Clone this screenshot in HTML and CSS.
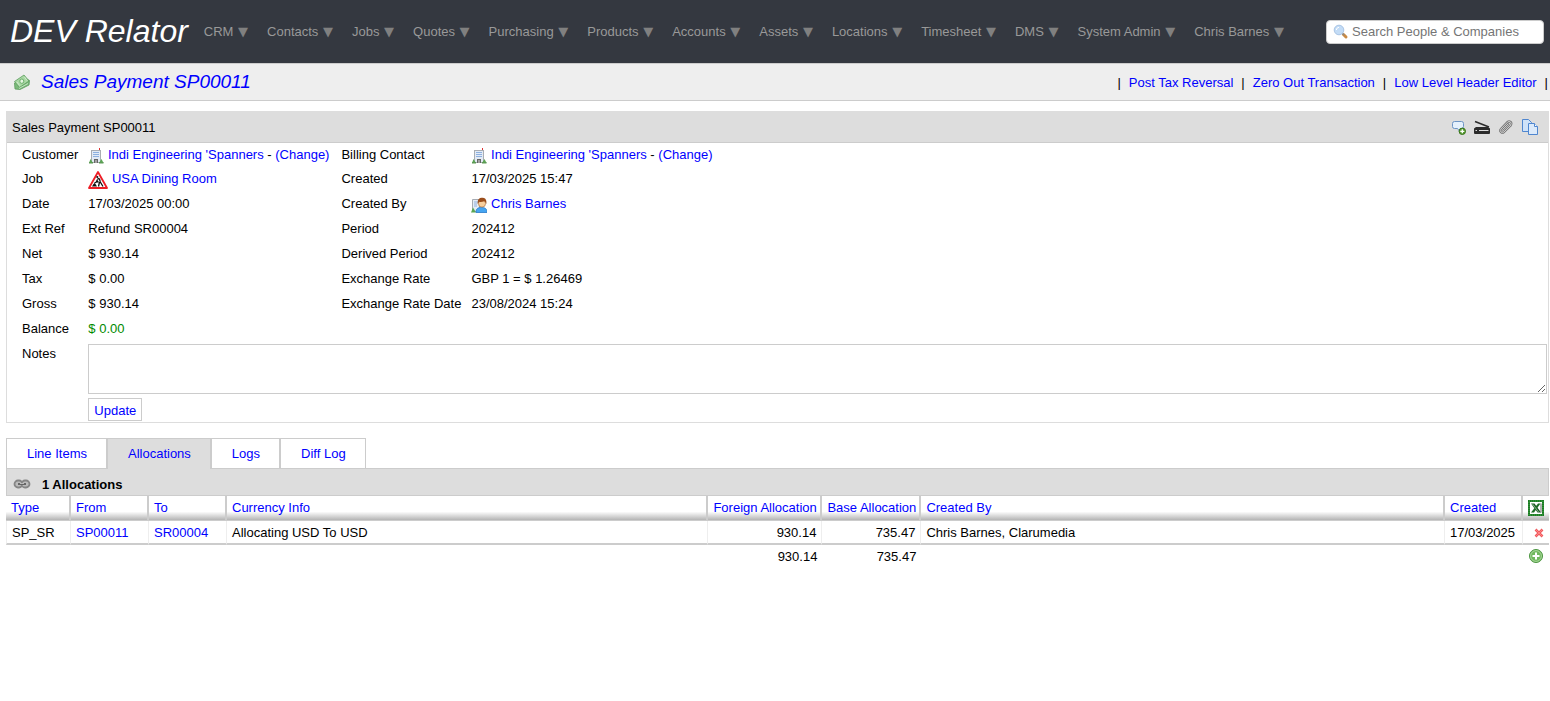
FILE: index.html
```
<!DOCTYPE html>
<html lang="en">
<head>
    <meta charset="UTF-8">
    <meta name="viewport" content="width=device-width, initial-scale=1.0">
    <title>Sales Payment SP00011</title>
    <link rel="stylesheet" href="styles.css">
</head>
<body>
    <svg class="sprite" aria-hidden="true">
        <symbol id="i-building" viewBox="0 0 16 16">
            <path d="M3 2h10v13H3z" fill="#a9adb3"/>
            <path d="M4 3h8v11H4z" fill="#e3ebf5"/>
            <path d="M5 4.500h6M5 6.500h6M5 8.500h6" stroke="#8db0e0"/>
            <path d="M6 11h4v4H6z" fill="#666"/>
            <path d="M7.500 12h1v3h-1z" fill="#ddd"/>
            <path d="M11 0h1v2h-1z" fill="#d33"/>
            <path d="M1 15l1.500-4L5 15zM11 15l2.500-4L15.500 15z" fill="#5aa653"/>
            <path d="M1 14h4v1.500H1zM11 14h4.500v1.500H11z" fill="#5c9a55"/>
        </symbol>
        <symbol id="i-works" viewBox="0 0 20 18">
            <path d="M10 1L19 17H1z" fill="#fff" stroke="#ee1c25" stroke-width="1.800" stroke-linejoin="round"/>
            <path d="M4 15.500l1.500-2.500h2L9 15.500z" fill="#111"/>
            <circle cx="9.300" cy="6" r="1.100" fill="#111"/>
            <path d="M9.500 7.500l2 .5.8 3L15 15.500M11.500 11L10.500 15.500M9.500 8.500L8.500 10.500l2 .5M10 10L6 12.500" fill="none" stroke="#111" stroke-width="1.300"/>
        </symbol>
        <symbol id="i-person" viewBox="0 0 16 16">
            <path d="M1.500 2.500h7v12h-7z" fill="#e4ecf5" stroke="#a5abb3"/>
            <path d="M3 5h4M3 7h3M3 9h3" stroke="#8fb0dd"/>
            <path d="M0 15.500l2-5 3 5z" fill="#5aa653"/>
            <path d="M5 15.500c0-4 2-5 5.500-5s5.500 1 5.500 5z" fill="#45a5f2" stroke="#2878c8" stroke-width=".8"/>
            <circle cx="11" cy="6.500" r="3.600" fill="#f8cf9d" stroke="#a3642e" stroke-width=".6"/>
            <path d="M6.800 7C6 2.500 8.500.5 11 .8c3-.3 5.200 2 4.200 6.200-.7-1.500-1-2.500-2-2.800-2 .8-4 .8-5 .5z" fill="#9b4d1b"/>
        </symbol>
        <symbol id="i-money" viewBox="0 0 16 16">
            <path d="M.5 9L10 3.500l5.500 3L15 11l-9 4.500L1 15z" fill="#7bb97b" stroke="#5a9c5c" stroke-width=".8"/>
            <path d="M.5 7.500L10 1l5 6-9.500 6.500z" fill="#a9d8a4" stroke="#5a9c5c" stroke-width=".8"/>
            <ellipse cx="7.800" cy="7.200" rx="2" ry="2.200" fill="#e3f5df" stroke="#6aaf6a"/>
            <path d="M3 8l2.500 3.500M10.500 3l2.500 3.500M5 14.500l9-5" stroke="#d8edd5" stroke-width=".8"/>
        </symbol>
        <symbol id="i-search" viewBox="0 0 16 16">
            <path d="M10.500 10.500l2.500 2.500" stroke="#c98a43" stroke-width="3" stroke-linecap="round"/>
            <path d="M9 9l2 2" stroke="#888" stroke-width="1.500"/>
            <circle cx="6" cy="6" r="4.800" fill="#c3dcf6" stroke="#a9c4e4"/>
            <path d="M3.300 6A3 3 0 0 1 6 3.300" stroke="#fff" fill="none"/>
        </symbol>
        <symbol id="i-comment" viewBox="0 0 16 16">
            <path d="M4.500 2.500h7q2 0 2 2v3q0 2-2 2H10.500V13.500L7.500 9.500h-3q-2 0-2-2v-3q0-2 2-2z" fill="#e4f0fc" stroke="#6c94c4"/>
            <circle cx="12.300" cy="12.300" r="3.200" fill="#5a9e33" stroke="#39751c"/>
            <path d="M12.300 10.300v4M10.300 12.300h4" stroke="#fff" stroke-width="1.300"/>
        </symbol>
        <symbol id="i-scanner" viewBox="0 0 16 16">
            <path d="M1 2.500L15 8" stroke="#2b2b2b" stroke-width="1.500"/>
            <path d="M2 8h12l2 1.500V14q0 1-1 1H1q-1 0-1-1V9.500z" fill="#2b2b2b"/>
            <path d="M5 11.500h9.500M1.500 11.500H3" stroke="#ddd" stroke-width="1.200"/>
        </symbol>
        <symbol id="i-clip" viewBox="0 0 16 16">
            <path d="M4.500 10.500L10 5M12.500 6.500L6 13q-1.500 1.500-3 0t0-3L9.500 3.200q1.500-1.500 3-.2t0 3.500" fill="none" stroke="#777" stroke-width="2.400" stroke-linecap="round"/>
            <path d="M4.500 10.500L10 5M12.500 6.500L6 13q-1.500 1.500-3 0t0-3L9.500 3.200q1.500-1.500 3-.2t0 3.500" fill="none" stroke="#ccc" stroke-linecap="round"/>
        </symbol>
        <symbol id="i-copy" viewBox="0 0 16 16">
            <path d="M.5.5h6L9.500 3.500v9h-9z" fill="#cfe2f8" stroke="#4f86cf"/>
            <path d="M6.500 4.500h6l3 3v8h-9z" fill="#dceafa" stroke="#4f86cf"/>
            <path d="M12.500 4.500v3h3" fill="#fff" stroke="#4f86cf"/>
        </symbol>
        <symbol id="i-link" viewBox="0 0 18 10">
            <rect x="1.500" y="1.500" width="8" height="7" rx="3.500" fill="#bbb" stroke="#858585" stroke-width="1.800"/>
            <rect x="8.500" y="1.500" width="8" height="7" rx="3.500" fill="#bbb" stroke="#858585" stroke-width="1.800"/>
            <path d="M5 5h8" stroke="#666" stroke-width="2"/>
            <path d="M7 4.500h4" stroke="#bbb"/>
        </symbol>
        <symbol id="i-excel" viewBox="0 0 16 16">
            <path d="M0 0h16v16H0z" fill="#1a7d22"/>
            <path d="M1 1h14v14H1z" fill="none" stroke="#4a9c4e" stroke-dasharray="1 1"/>
            <path d="M2 2h12v12H2z" fill="#fff"/>
            <path d="M3 3.500h3.500l6.500 9H9.500z" fill="#1d5b25"/>
            <path d="M12.500 3.500H10L3 12.500h3z" fill="#1d6b25"/>
            <path d="M4.500 4l6 8" stroke="#9cc8a0" stroke-width=".8"/>
            <path d="M13 3.500v9" stroke="#666"/>
        </symbol>
        <symbol id="i-delete" viewBox="0 0 10 10">
            <path d="M1.500 1.500l7 7M8.500 1.500l-7 7" stroke="#ef5a5d" stroke-width="2.600"/>
            <path d="M2 2l6 6M8 2L2 8" stroke="#ff8184"/>
        </symbol>
        <symbol id="i-add" viewBox="0 0 16 16">
            <circle cx="8" cy="8" r="6.500" fill="#71b85f" stroke="#4b9440"/>
            <circle cx="8" cy="8" r="5.400" fill="none" stroke="#b7dfab" stroke-width=".8"/>
            <path d="M8 4.500v7M4.500 8h7" stroke="#fff" stroke-width="2"/>
        </symbol>
    </svg>

    <header class="header">
        <div class="logo">DEV Relator</div>
        <nav class="menu">
            <a href="#">CRM <span>▼</span></a>
            <a href="#">Contacts <span>▼</span></a>
            <a href="#">Jobs <span>▼</span></a>
            <a href="#">Quotes <span>▼</span></a>
            <a href="#">Purchasing <span>▼</span></a>
            <a href="#">Products <span>▼</span></a>
            <a href="#">Accounts <span>▼</span></a>
            <a href="#">Assets <span>▼</span></a>
            <a href="#">Locations <span>▼</span></a>
            <a href="#">Timesheet <span>▼</span></a>
            <a href="#">DMS <span>▼</span></a>
            <a href="#">System Admin <span>▼</span></a>
            <a href="#">Chris Barnes <span>▼</span></a>
        </nav>
        <label class="search">
            <svg class="icon"><use href="#i-search"/></svg>
            <input type="text" placeholder="Search People &amp; Companies" aria-label="Search People &amp; Companies">
        </label>
    </header>

    <div class="page-bar">
        <svg class="icon"><use href="#i-money"/></svg>
        <h1><a href="#">Sales Payment SP00011</a></h1>
        <div class="page-links">
            <span>|</span>
            <a href="#">Post Tax Reversal</a>
            <span>|</span>
            <a href="#">Zero Out Transaction</a>
            <span>|</span>
            <a href="#">Low Level Header Editor</a>
            <span>|</span>
        </div>
    </div>

    <main class="content">
        <section class="panel">
            <div class="panel-head">
                <span>Sales Payment SP00011</span>
                <div class="panel-tools">
                    <a href="#" title="Add comment"><svg class="icon"><use href="#i-comment"/></svg></a>
                    <a href="#" title="Scan"><svg class="icon"><use href="#i-scanner"/></svg></a>
                    <a href="#" title="Attachments"><svg class="icon"><use href="#i-clip"/></svg></a>
                    <a href="#" title="Copy"><svg class="icon"><use href="#i-copy"/></svg></a>
                </div>
            </div>
            <table class="details">
                <tr>
                    <th>Customer</th>
                    <td><svg class="icon"><use href="#i-building"/></svg> <a href="#">Indi Engineering 'Spanners</a> - <a href="#">(Change)</a></td>
                    <th>Billing Contact</th>
                    <td class="last"><svg class="icon"><use href="#i-building"/></svg> <a href="#">Indi Engineering 'Spanners</a> - <a href="#">(Change)</a></td>
                </tr>
                <tr>
                    <th>Job</th>
                    <td><svg class="icon icon-works"><use href="#i-works"/></svg> <a href="#">USA Dining Room</a></td>
                    <th>Created</th>
                    <td>17/03/2025 15:47</td>
                </tr>
                <tr>
                    <th>Date</th>
                    <td>17/03/2025 00:00</td>
                    <th>Created By</th>
                    <td><svg class="icon"><use href="#i-person"/></svg> <a href="#">Chris Barnes</a></td>
                </tr>
                <tr>
                    <th>Ext Ref</th>
                    <td>Refund SR00004</td>
                    <th>Period</th>
                    <td>202412</td>
                </tr>
                <tr>
                    <th>Net</th>
                    <td>$ 930.14</td>
                    <th>Derived Period</th>
                    <td>202412</td>
                </tr>
                <tr>
                    <th>Tax</th>
                    <td>$ 0.00</td>
                    <th>Exchange Rate</th>
                    <td>GBP 1 = $ 1.26469</td>
                </tr>
                <tr>
                    <th>Gross</th>
                    <td>$ 930.14</td>
                    <th>Exchange Rate Date</th>
                    <td>23/08/2024 15:24</td>
                </tr>
                <tr>
                    <th>Balance</th>
                    <td class="balance">$ 0.00</td>
                </tr>
                <tr>
                    <th><label for="notes">Notes</label></th>
                    <td class="notes" colspan="3">
                        <textarea id="notes"></textarea>
                        <button type="button">Update</button>
                    </td>
                </tr>
            </table>
        </section>

        <nav class="tabs">
            <a href="#">Line Items</a>
            <a href="#" class="active">Allocations</a>
            <a href="#">Logs</a>
            <a href="#">Diff Log</a>
        </nav>

        <section class="list">
            <h2><svg class="icon-link"><use href="#i-link"/></svg>1 Allocations</h2>
            <table class="grid">
                <colgroup>
                    <col class="c-type">
                    <col class="c-ref">
                    <col class="c-ref">
                    <col class="c-info">
                    <col class="c-foreign">
                    <col class="c-base">
                    <col>
                    <col class="c-date">
                    <col class="c-action">
                </colgroup>
                <thead>
                    <tr>
                        <th><a href="#">Type</a></th>
                        <th><a href="#">From</a></th>
                        <th><a href="#">To</a></th>
                        <th><a href="#">Currency Info</a></th>
                        <th class="num"><a href="#">Foreign Allocation</a></th>
                        <th class="num"><a href="#">Base Allocation</a></th>
                        <th><a href="#">Created By</a></th>
                        <th><a href="#">Created</a></th>
                        <th class="action"><a href="#" title="Export"><svg class="icon"><use href="#i-excel"/></svg></a></th>
                    </tr>
                </thead>
                <tbody>
                    <tr>
                        <td>SP_SR</td>
                        <td><a href="#">SP00011</a></td>
                        <td><a href="#">SR00004</a></td>
                        <td>Allocating USD To USD</td>
                        <td class="num">930.14</td>
                        <td class="num">735.47</td>
                        <td>Chris Barnes, Clarumedia</td>
                        <td>17/03/2025</td>
                        <td class="action"><a href="#" title="Delete"><svg class="icon-delete"><use href="#i-delete"/></svg></a></td>
                    </tr>
                </tbody>
                <tfoot>
                    <tr>
                        <td colspan="4"></td>
                        <td class="num">930.14</td>
                        <td class="num">735.47</td>
                        <td colspan="2"></td>
                        <td class="action"><a href="#" title="Add"><svg class="icon"><use href="#i-add"/></svg></a></td>
                    </tr>
                </tfoot>
            </table>
        </section>
    </main>
</body>
</html>
```

FILE: styles.css
```
* {
    box-sizing: border-box;
}

body {
    margin: 0;
    font-family: "Liberation Sans", Arial, sans-serif;
    font-size: 13px;
    color: #000;
    background: #fff;
}

a {
    color: #00f;
    text-decoration: none;
}

table {
    border-collapse: separate;
    border-spacing: 0;
    width: 100%;
}

th {
    font-weight: normal;
    text-align: left;
}

.sprite {
    position: absolute;
    width: 0;
    height: 0;
}

.icon {
    width: 16px;
    height: 16px;
    vertical-align: middle;
}

.icon-works {
    width: 20px;
    height: 18px;
}

/* top menu */
.header {
    display: flex;
    align-items: center;
    height: 63px;
    padding: 0 6px 0 10px;
    background: #343840;
}

.logo {
    font-size: 32px;
    font-style: italic;
    color: #fff;
    white-space: nowrap;
}

.menu {
    display: flex;
    gap: 19px;
    margin-left: 16px;
    line-height: 16px;
    white-space: nowrap;
}

.menu a {
    color: #999;
}

.menu span {
    margin-left: 1px;
    color: #808080;
    font-family: "DejaVu Sans", sans-serif;
}

.search {
    display: flex;
    align-items: center;
    gap: 3px;
    width: 218px;
    height: 24px;
    margin-left: auto;
    padding-left: 6px;
    border: 1px solid #ccc;
    border-radius: 4px;
    background: #fff;
}

.search .icon {
    flex: none;
}

.search input {
    flex: 1;
    min-width: 0;
    padding: 0;
    border: 0;
    outline: 0;
    background: none;
    font: inherit;
}

/* page title bar */
.page-bar {
    display: flex;
    align-items: center;
    height: 38px;
    padding: 0 2px 0 14px;
    border-top: 1px solid #ccc;
    border-bottom: 1px solid #ccc;
    background: #eee;
}

.page-bar h1 {
    margin: 0 0 0 11px;
    font-size: 19px;
    font-weight: normal;
    font-style: italic;
    line-height: 24px;
}

.page-links {
    display: flex;
    gap: 8px;
    margin-left: auto;
}

.content {
    padding: 10px 1px 0 6px;
}

/* details panel */
.panel {
    border: 1px solid #ddd;
}

.panel-head {
    display: flex;
    align-items: center;
    justify-content: space-between;
    height: 31px;
    padding: 0 10px 0 5px;
    border-bottom: 1px solid #ccc;
    background: #ddd;
}

.panel-tools {
    display: flex;
    gap: 8px;
}

.details th,
.details td {
    height: 25px;
    padding: 0 12px 0 0;
    line-height: 24px;
    vertical-align: top;
    white-space: nowrap;
}

.details tr:first-child > * {
    height: 24px;
}

.details th {
    padding-right: 10px;
}

.details th:first-child {
    padding-left: 15px;
}

.details .last {
    width: 100%;
}

.details .balance {
    color: #008a00;
}

.details .notes {
    padding: 2px 1px 1px 0;
}

.notes textarea {
    display: block;
    width: 100%;
    height: 50px;
    margin: 0 0 4px;
    border: 1px solid #ccc;
    font: inherit;
}

.notes button {
    display: block;
    height: 23px;
    padding: 0 5px 2px;
    border: 1px solid #ccc;
    background: #fff;
    color: #00f;
    font: inherit;
}

/* tabs */
.tabs {
    display: flex;
    height: 30px;
    margin-top: 15px;
}

.tabs a {
    height: 30px;
    padding: 0 19px 0 20px;
    border: 1px solid #ccc;
    border-bottom: 0;
    line-height: 30px;
}

/* covers the top border of the list below */
.tabs .active {
    z-index: 1;
    height: 31px;
    background: #ddd;
}

/* allocations list */
.list h2 {
    display: flex;
    align-items: center;
    gap: 11px;
    height: 28px;
    margin: 0;
    padding: 4px 0 0 6px;
    border: 1px solid #ccc;
    background: #ddd;
    font-size: 13px;
}

.icon-link {
    width: 18px;
    height: 10px;
}

.grid {
    table-layout: fixed;
}

.c-type {
    width: 65px;
}

.c-ref {
    width: 78px;
}

.c-info {
    width: 31.2%;
}

.c-foreign {
    width: 114px;
}

.c-base {
    width: 99px;
}

.c-date {
    width: 78px;
}

.c-action {
    width: 26px;
}

.grid th,
.grid td {
    height: 24px;
    padding: 0 5px;
    white-space: nowrap;
}

.grid thead th {
    height: 25px;
    padding: 0 4px 2px 5px;
    border-right: 2px solid #ccc;
    border-bottom: 1px solid #ccc;
    background: linear-gradient(#fff 65%, #b4b4b4);
}

.grid tbody td {
    border-right: 1px solid #eee;
    border-bottom: 2px solid #ccc;
}

.grid tbody td:first-child {
    border-left: 1px solid #eee;
}

.grid tfoot td {
    height: 22px;
}

.grid .num {
    text-align: right;
}

.grid thead .action,
.grid .action {
    padding: 0 5px 0 0;
    border-right: 0;
    text-align: right;
}

.icon-delete {
    width: 10px;
    height: 10px;
    vertical-align: middle;
}
```
